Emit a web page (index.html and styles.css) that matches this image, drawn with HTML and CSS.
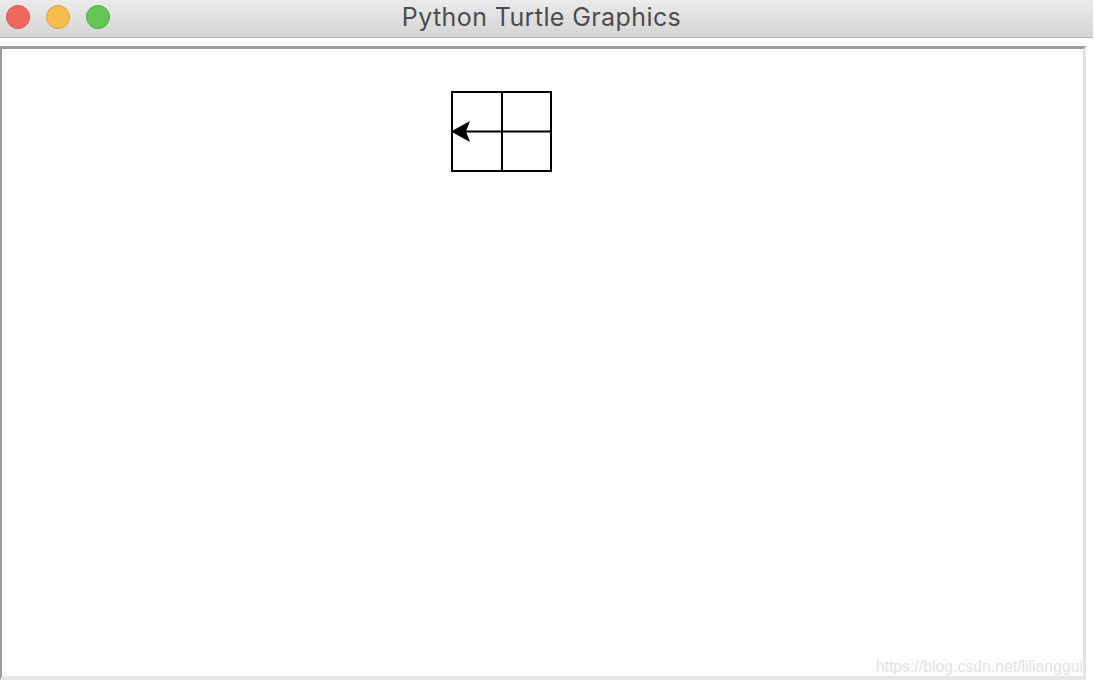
FILE: index.html
```html
<!DOCTYPE html>
<html>
<head>
<meta charset="utf-8">
<link rel="stylesheet" href="styles.css">
</head>
<body>
<div class="window">
  <div class="titlebar">
    <div class="lights">
      <span class="light red"></span>
      <span class="light yellow"></span>
      <span class="light green"></span>
    </div>
    <div class="title">Python Turtle Graphics</div>
  </div>
  <div class="content">
    <div class="canvas">
      <svg class="drawing" viewBox="2 49 1081 627" width="1081" height="627">
        <g fill="none" stroke="#000" stroke-width="2">
          <rect x="452" y="92" width="99" height="79"/>
          <line x1="502" y1="91" x2="502" y2="171"/>
          <line x1="451" y1="131.5" x2="551" y2="131.5"/>
        </g>
        <polygon points="451,131.5 470,121 466,131.5 470,142" fill="#000"/>
      </svg>
      <span class="watermark">https://blog.csdn.net/lilianggui</span>
    </div>
  </div>
</div>
</body>
</html>
```
FILE: styles.css
```css
html, body {
  margin: 0;
  padding: 0;
  background: #ffffff;
}
.window {
  width: 1093px;
  height: 686px;
  display: flex;
  flex-direction: column;
  background: #ffffff;
  border-bottom-right-radius: 10px;
  overflow: hidden;
}
.titlebar {
  height: 37px;
  flex: none;
  background: linear-gradient(#ebebeb, #d5d5d5);
  border-bottom: 1px solid #b3b3b3;
  display: flex;
  align-items: center;
}
.lights {
  display: flex;
  gap: 16px;
  padding-left: 6px;
  margin-top: -3px;
}
.light {
  width: 22px;
  height: 22px;
  border-radius: 50%;
  display: block;
}
.red { background: #ee6a5f; border: 1px solid #d9574d; }
.yellow { background: #f5be4f; border: 1px solid #dea23a; }
.green { background: #62c554; border: 1px solid #52ab45; }
.title {
  flex: 1;
  text-align: center;
  font-family: Inter, "Liberation Sans", Arial, sans-serif;
  font-size: 25px;
  letter-spacing: 0.4px;
  color: #4d4d4d;
  margin-left: -120px;
  margin-top: -3px;
}
.content {
  flex: 1;
  padding-top: 8px;
}
.canvas {
  position: relative;
  width: 1081px;
  height: 627px;
  border-top: 3px solid #9b9b9b;
  border-left: 2px solid #9b9b9b;
  border-right: 3px solid #e3e3e3;
  border-bottom: 4px solid #e6e6e6;
  background: #ffffff;
}
.drawing {
  display: block;
}
.watermark {
  position: absolute;
  right: 0;
  bottom: 0;
  font-family: "Liberation Sans", Arial, sans-serif;
  font-size: 15.8px;
  color: #e2e2e2;
}
```
